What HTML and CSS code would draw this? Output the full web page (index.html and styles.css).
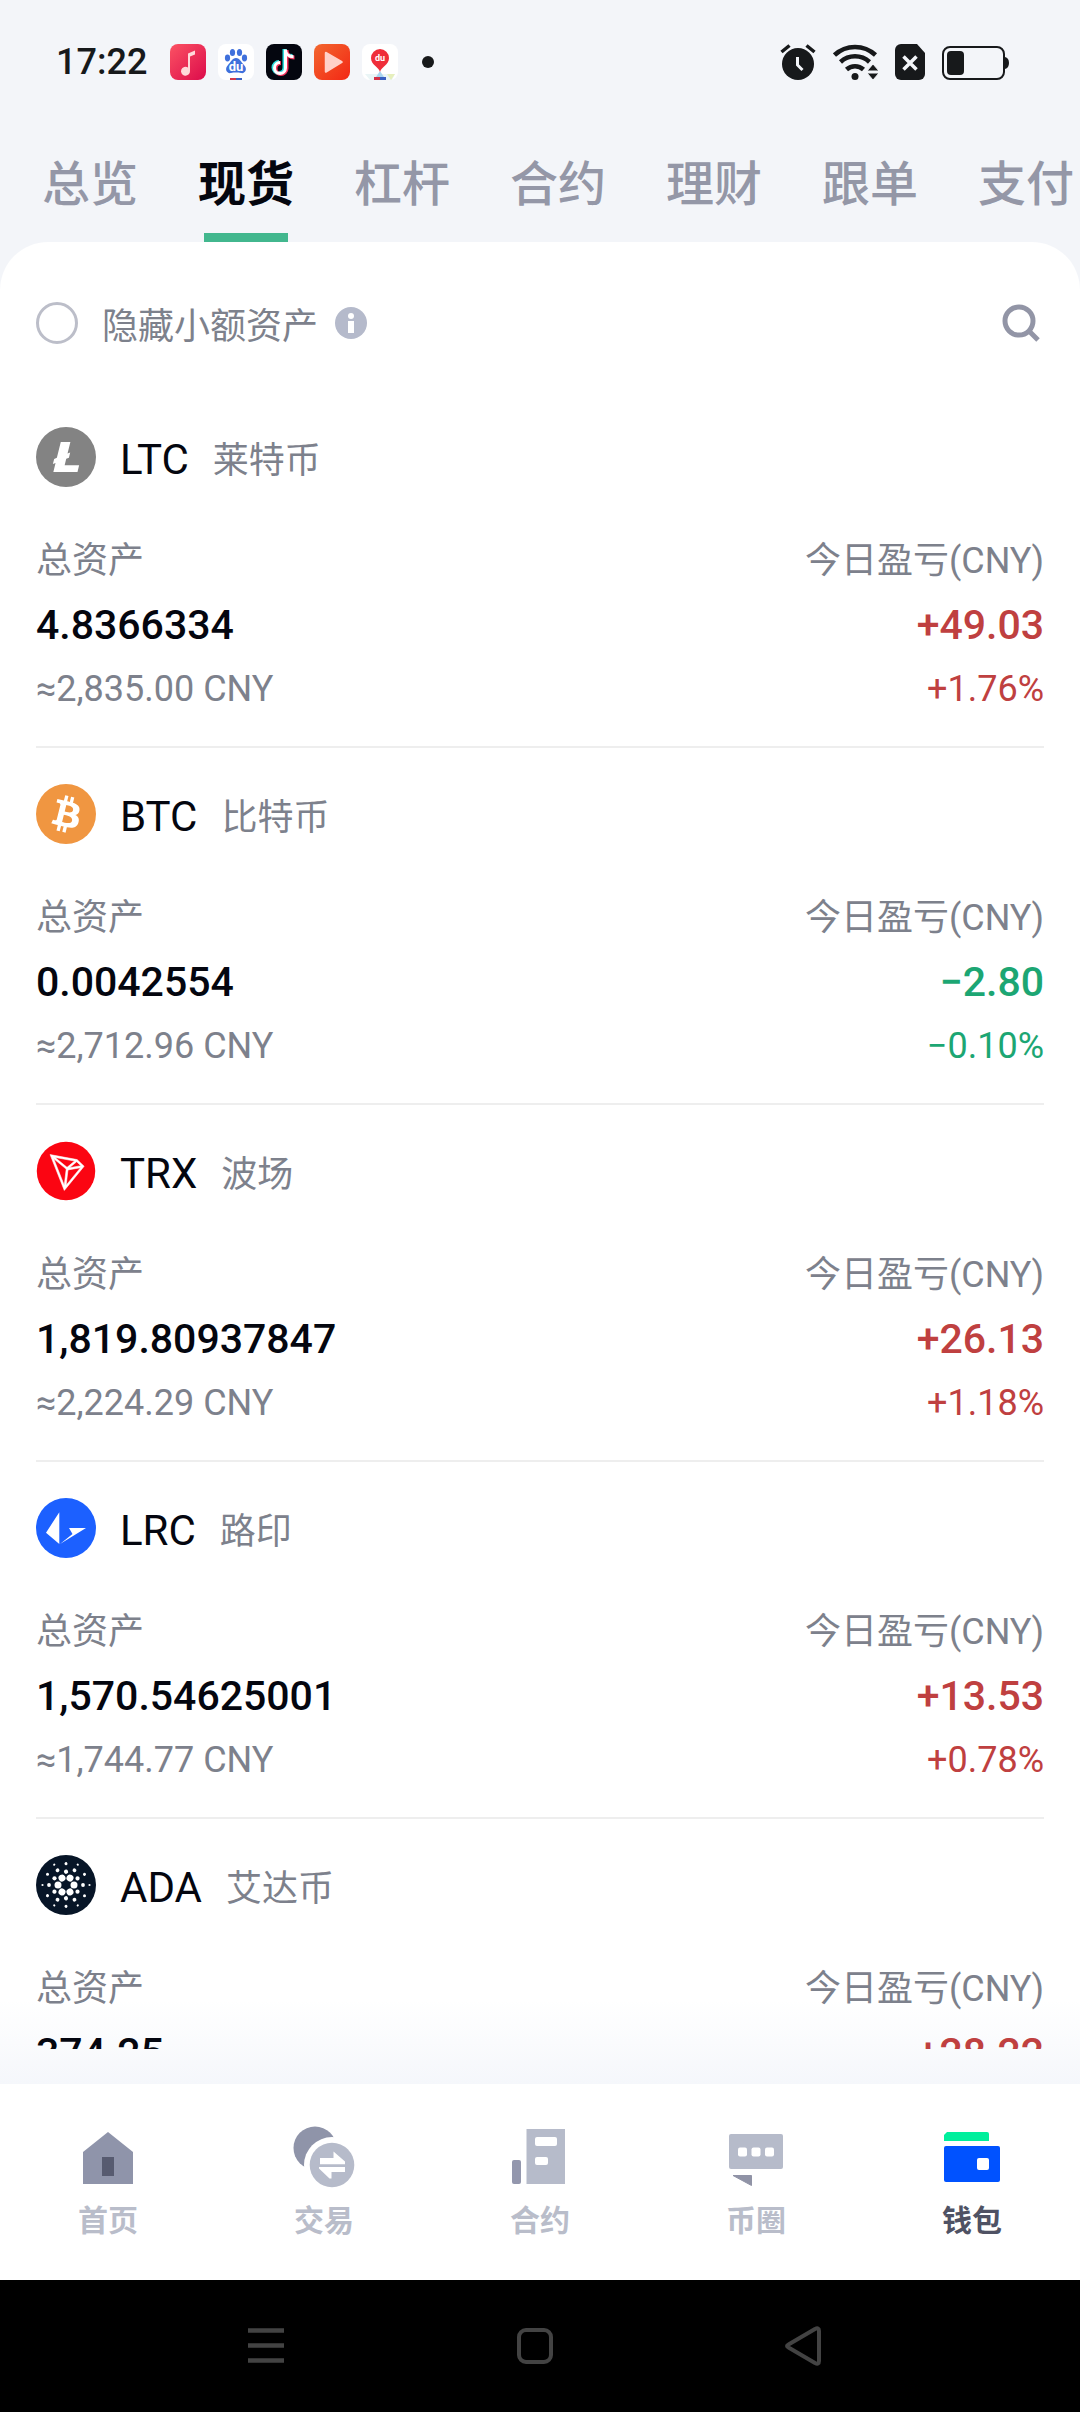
FILE: index.html
```html
<!DOCTYPE html>
<html lang="zh-CN">
<head>
<meta charset="utf-8">
<meta name="viewport" content="width=device-width, initial-scale=1">
<title>钱包 - 现货</title>
<link rel="stylesheet" href="styles.css">
</head>
<body>
<div class="app">
  <header class="status">
    <div class="status-group status-left">
      <time class="clock">17:22</time>
      <svg class="app-icon" viewBox="0 0 36 36" aria-hidden="true">
        <defs><linearGradient id="music" x1="0" y1="0" x2="1" y2="1"><stop offset="0" stop-color="#fb5263"/><stop offset="1" stop-color="#dc0b4b"/></linearGradient></defs>
        <rect width="36" height="36" rx="8" fill="url(#music)"/>
        <path d="M18 9.500l7-3v4l-5 2V27a4.500 4.500 0 1 1-2-3.500z" fill="#ffd9da"/>
      </svg>
      <svg class="app-icon" viewBox="0 0 36 36" aria-hidden="true">
        <rect width="36" height="36" rx="8" fill="#fff"/>
        <g fill="#3f70dc">
          <ellipse cx="9.500" cy="14" rx="2.600" ry="3.400"/><ellipse cx="14.500" cy="8.500" rx="2.600" ry="3.500"/><ellipse cx="21.500" cy="8.500" rx="2.600" ry="3.500"/><ellipse cx="26.500" cy="14" rx="2.600" ry="3.400"/>
          <path d="M18 14c4 0 5 4 8 7 4 4 1 9-3 8-3-.6-7-.6-10 0-4 1-7-4-3-8 3-3 4-7 8-7z"/>
        </g>
        <text class="icon-word" x="18" y="27" text-anchor="middle">du</text>
        <path d="M12 34h6v2h-6z" fill="#d23a4c"/><path d="M18 34h6v2h-6z" fill="#3b62c4"/>
      </svg>
      <svg class="app-icon" viewBox="0 0 36 36" aria-hidden="true">
        <rect width="36" height="36" rx="8" fill="#04060f"/>
        <g fill="none" stroke-width="4">
          <path d="M18.500 5v18.500a5.500 5.500 0 1 1-5.500-5.500M18.500 5c0 4 3 7 8 7" stroke="#2de0e0"/>
          <path d="M20.500 6v18.500a5.500 5.500 0 1 1-5.500-5.500M20.500 6c0 4 3 7.500 8 7.500" stroke="#f4325c"/>
          <path d="M19.500 5.500v18.500a5.500 5.500 0 1 1-5.500-5.500M19.500 5.500c0 4 3 7.200 8 7.200" stroke="#fff" stroke-width="3"/>
        </g>
      </svg>
      <svg class="app-icon" viewBox="0 0 36 36" aria-hidden="true">
        <defs><linearGradient id="video" x1="0" y1="0" x2="1" y2="1"><stop offset="0" stop-color="#f2672f"/><stop offset="1" stop-color="#f32714"/></linearGradient></defs>
        <rect width="36" height="36" rx="8" fill="url(#video)"/>
        <path d="M12 9l15.500 9L12 27.500z" fill="#ffd0c8" stroke="#ffd0c8" stroke-width="2.500" stroke-linejoin="round"/>
      </svg>
      <svg class="app-icon" viewBox="0 0 36 36" aria-hidden="true">
        <rect width="36" height="36" rx="8" fill="#fff"/>
        <path d="M3 30h30l-3 6H8z" fill="#eaf5f6"/><path d="M25 30h8l-4 6z" fill="#e6efbd"/>
        <path d="M18 27l6 9H12z" fill="#a9d5ef"/>
        <path d="M18 28c-1-5-9-7-9-14a9 9 0 0 1 18 0c0 7-8 9-9 14z" fill="#ef2e3a"/>
        <text class="icon-word icon-word-small" x="18" y="17" text-anchor="middle">du</text>
        <path d="M12 33h6v3h-6z" fill="#d33045"/><path d="M18 33h6v3h-6z" fill="#365fc0"/>
      </svg>
      <span class="more-dot"></span>
    </div>
    <div class="status-group status-right">
      <svg width="36" height="36" viewBox="0 0 36 36" aria-hidden="true">
        <circle cx="18" cy="20" r="16" fill="#17191b"/>
        <path d="M1.500 8l8-6.500M34.500 8l-8-6.500" stroke="#17191b" stroke-width="3.500"/>
        <path d="M17.500 13v8l5 5" fill="none" stroke="#f3f5f9" stroke-width="3"/>
      </svg>
      <svg width="45" height="36" viewBox="0 0 45 36" aria-hidden="true">
        <g fill="none" stroke="#17191b" stroke-width="4.500"><path d="M1.500 11a30 30 0 0 1 41 0"/><path d="M7.500 18a21.500 21.500 0 0 1 29 0"/><path d="M13.500 25.500a12.500 12.500 0 0 1 17 0"/></g>
        <circle cx="22" cy="32.500" r="3.500" fill="#17191b"/>
        <path d="M40 20l6 7H34zM34 29h12l-6 7z" fill="#17191b" stroke="#f3f5f9"/>
      </svg>
      <svg width="30" height="36" viewBox="0 0 30 36" aria-hidden="true">
        <path d="M6 0h16l8 9v21a6 6 0 0 1-6 6H6a6 6 0 0 1-6-6V6a6 6 0 0 1 6-6z" fill="#17191b"/>
        <path d="M8.500 12.500l13 13M21.500 12.500l-13 13" stroke="#f3f5f9" stroke-width="3.500"/>
      </svg>
      <svg width="67" height="36" viewBox="0 0 67 36" aria-hidden="true">
        <rect x="1" y="3" width="61" height="32" rx="7" fill="none" stroke="#17191b" stroke-width="2"/>
        <rect x="5" y="7" width="17" height="24" rx="4" fill="#17191b"/>
        <path d="M63 13q4 1 4 6t-4 6z" fill="#17191b"/>
      </svg>
    </div>
  </header>

  <nav class="tabs" aria-label="账户">
    <a class="tab" href="#overview">总览</a>
    <a class="tab tab-active" href="#spot" aria-current="page">现货</a>
    <a class="tab" href="#margin">杠杆</a>
    <a class="tab" href="#futures">合约</a>
    <a class="tab" href="#earn">理财</a>
    <a class="tab" href="#copy">跟单</a>
    <a class="tab" href="#pay">支付</a>
  </nav>

  <main class="panel">
    <div class="filter">
      <input class="filter-check" type="checkbox" id="hide-small">
      <label class="filter-label" for="hide-small">隐藏小额资产</label>
      <button class="icon-button" type="button" aria-label="说明">
        <svg width="32" height="32" viewBox="0 0 32 32"><circle cx="16" cy="16" r="16" fill="#b5bacb"/><circle cx="16" cy="9" r="3" fill="#fff"/><path d="M13 14h6v12h-6z" fill="#fff"/></svg>
      </button>
      <button class="icon-button search" type="button" aria-label="搜索">
        <svg width="42" height="42" viewBox="0 0 42 42"><circle cx="17" cy="19" r="14" fill="none" stroke="#9295a6" stroke-width="5"/><path d="M26 28l10 10" stroke="#9295a6" stroke-width="5"/></svg>
      </button>
    </div>

    <ul class="assets">
      <li class="asset">
        <div class="asset-head">
          <svg class="coin" viewBox="0 0 32 32" aria-hidden="true"><circle cx="16" cy="16" r="16" fill="#838383"/><path d="M10.427 19.214L9 19.768l.688-2.759 1.444-.58L13.213 8h5.129l-1.519 6.196 1.410-.571-.68 2.750-1.427.571-.848 3.483H23L22.127 24H9.252z" fill="#fff"/></svg>
          <h2 class="ticker">LTC</h2><span class="name">莱特币</span>
        </div>
        <div class="asset-body">
          <div class="col"><span class="muted">总资产</span><strong class="amount">4.8366334</strong><span class="muted">≈2,835.00 CNY</span></div>
          <div class="col col-end up"><span class="muted">今日盈亏(CNY)</span><strong class="amount">+49.03</strong><span>+1.76%</span></div>
        </div>
      </li>
      <li class="asset">
        <div class="asset-head">
          <svg class="coin" viewBox="0 0 32 32" aria-hidden="true"><circle cx="16" cy="16" r="16" fill="#f09641"/><path d="M23.189 14.020c.314-2.096-1.283-3.223-3.465-3.975l.708-2.840-1.728-.43-.69 2.765c-.454-.114-.92-.22-1.385-.326l.695-2.783L15.596 6l-.708 2.839c-.376-.086-.746-.17-1.104-.26l.002-.009-2.384-.595-.46 1.846s1.283.294 1.256.312c.7.175.826.638.805 1.006l-.806 3.235c.048.012.11.03.18.057l-.183-.045-1.130 4.532c-.086.212-.303.531-.793.41.018.025-1.256-.313-1.256-.313l-.858 1.978 2.250.561c.418.105.828.215 1.231.318l-.715 2.872 1.727.43.708-2.840c.472.127.93.245 1.378.357l-.706 2.828 1.728.43.715-2.866c2.948.558 5.164.333 6.097-2.333.752-2.146-.037-3.385-1.588-4.192 1.130-.26 1.980-1.003 2.207-2.538zm-3.950 5.538c-.533 2.147-4.148.986-5.320.695l.95-3.805c1.172.293 4.929.872 4.370 3.110zm.535-5.569c-.487 1.953-3.495.96-4.470.717l.86-3.450c.975.243 4.118.696 3.610 2.733z" fill="#fff"/></svg>
          <h2 class="ticker">BTC</h2><span class="name">比特币</span>
        </div>
        <div class="asset-body">
          <div class="col"><span class="muted">总资产</span><strong class="amount">0.0042554</strong><span class="muted">≈2,712.96 CNY</span></div>
          <div class="col col-end down"><span class="muted">今日盈亏(CNY)</span><strong class="amount">−2.80</strong><span>−0.10%</span></div>
        </div>
      </li>
      <li class="asset">
        <div class="asset-head">
          <svg class="coin" viewBox="0 0 32 32" aria-hidden="true"><circle cx="16" cy="16" r="15.600" fill="#fb0512"/><path d="M21.932 9.913L7.500 7.257l7.595 19.112 10.583-12.894-3.746-3.562zm-.232 1.170l2.208 2.099-6.038 1.093 3.830-3.192zm-5.142 2.973l-6.364-5.278 10.402 1.914-4.038 3.364zm-.453.934l-1.038 8.580L9.472 9.487l6.633 5.502zm.96.455l6.687-1.210-7.670 9.343.983-8.133z" fill="#fff" stroke="#fff" stroke-width=".3"/></svg>
          <h2 class="ticker">TRX</h2><span class="name">波场</span>
        </div>
        <div class="asset-body">
          <div class="col"><span class="muted">总资产</span><strong class="amount">1,819.80937847</strong><span class="muted">≈2,224.29 CNY</span></div>
          <div class="col col-end up"><span class="muted">今日盈亏(CNY)</span><strong class="amount">+26.13</strong><span>+1.18%</span></div>
        </div>
      </li>
      <li class="asset">
        <div class="asset-head">
          <svg class="coin" viewBox="0 0 60 60" aria-hidden="true"><circle cx="30" cy="30" r="30" fill="#1c60ff"/><path d="M23.300 14.300v31.700L10 34.700zM33 30h17L24 46l12.500-10z" fill="#fff"/></svg>
          <h2 class="ticker">LRC</h2><span class="name">路印</span>
        </div>
        <div class="asset-body">
          <div class="col"><span class="muted">总资产</span><strong class="amount">1,570.54625001</strong><span class="muted">≈1,744.77 CNY</span></div>
          <div class="col col-end up"><span class="muted">今日盈亏(CNY)</span><strong class="amount">+13.53</strong><span>+0.78%</span></div>
        </div>
      </li>
      <li class="asset">
        <div class="asset-head">
          <svg class="coin" viewBox="0 0 60 60" aria-hidden="true">
            <defs><g id="ray"><circle cx="38" cy="30" r="3.500"/><circle cx="47" cy="30" r="1.900"/><circle cx="53.500" cy="30" r="1.100"/><circle cx="41.500" cy="36.700" r="2.100"/><circle cx="48.500" cy="40.700" r="1.500"/></g></defs>
            <circle cx="30" cy="30" r="30" fill="#071527"/>
            <g fill="#fff"><use href="#ray"/><use href="#ray" transform="rotate(60 30 30)"/><use href="#ray" transform="rotate(120 30 30)"/><use href="#ray" transform="rotate(180 30 30)"/><use href="#ray" transform="rotate(240 30 30)"/><use href="#ray" transform="rotate(300 30 30)"/></g>
          </svg>
          <h2 class="ticker">ADA</h2><span class="name">艾达币</span>
        </div>
        <div class="asset-body">
          <div class="col"><span class="muted">总资产</span><strong class="amount">374.25</strong></div>
          <div class="col col-end up"><span class="muted">今日盈亏(CNY)</span><strong class="amount">+28.22</strong></div>
        </div>
      </li>
    </ul>
  </main>

  <nav class="bottom-nav" aria-label="主导航">
    <a class="nav-item" href="#home">
      <svg width="64" height="64" viewBox="0 0 64 64"><path d="M32 7l25 20v32H7V27z" fill="#8f94aa"/><path d="M26 32h12v19H26z" fill="#575b70"/></svg>
      首页
    </a>
    <a class="nav-item" href="#trade">
      <svg width="64" height="64" viewBox="0 0 64 64"><circle cx="23" cy="23" r="21.500" fill="#8f94a9"/><circle cx="40" cy="40" r="28" fill="#fff"/><circle cx="40" cy="40" r="22.300" fill="#b6bbca"/><path d="M28 33h13.500v-6.500L53 36.500v2.700H28zM53 42v5H39.500v6.500h-2L27 43.500V42z" fill="#fff"/></svg>
      交易
    </a>
    <a class="nav-item" href="#contract">
      <svg width="64" height="64" viewBox="0 0 64 64"><path d="M18.500 4H57v55H18.500z" fill="#b6bbca"/><rect x="27" y="12" width="22" height="9" rx="2" fill="#fff"/><rect x="27" y="32" width="13" height="8" rx="2" fill="#fff"/><rect x="4" y="35" width="9" height="24" rx="2" fill="#9397ad"/></svg>
      合约
    </a>
    <a class="nav-item" href="#circle">
      <svg width="64" height="64" viewBox="0 0 64 64"><rect x="5" y="9" width="54" height="35" rx="2" fill="#b6bbca"/><g fill="#fff"><rect x="14" y="22.500" width="9" height="9" rx="2"/><rect x="27.500" y="22.500" width="9" height="9" rx="2"/><rect x="41" y="22.500" width="9" height="9" rx="2"/></g><path d="M9 50.500h18.500v10z" fill="#9093a6" stroke="#9093a6" stroke-linejoin="round"/></svg>
      币圈
    </a>
    <a class="nav-item nav-active" href="#wallet" aria-current="page">
      <svg width="64" height="64" viewBox="0 0 64 64"><path d="M7 7h40a2 2 0 0 1 2 2v7H4v-6z" fill="#00ef9c"/><rect x="4" y="21" width="56" height="36" rx="2" fill="#0052ff"/><rect x="37" y="33" width="12" height="12" rx="2" fill="#fff"/></svg>
      钱包
    </a>
  </nav>

  <footer class="system-bar">
    <button class="icon-button" type="button" aria-label="最近任务"><svg width="36" height="40" viewBox="0 0 36 40"><path d="M0 4.500h36M0 19.500h36M0 34.500h36" stroke="#434343" stroke-width="4.500"/></svg></button>
    <button class="icon-button" type="button" aria-label="主屏幕"><svg width="36" height="40" viewBox="0 0 36 40"><rect x="2" y="4" width="32" height="32" rx="7" fill="none" stroke="#434343" stroke-width="4"/></svg></button>
    <button class="icon-button" type="button" aria-label="返回"><svg width="36" height="40" viewBox="0 0 36 40"><path d="M3.500 18.500L30 3q4-2 4 2v30q0 4-4 2L3.500 21.500q-3-1.500 0-3z" fill="none" stroke="#434343" stroke-width="4" stroke-linejoin="round"/></svg></button>
  </footer>
</div>
</body>
</html>
```
FILE: styles.css
```css
* {
  box-sizing: border-box;
}

body {
  margin: 0;
  background: #f3f5f9;
  font-family: Roboto, "Noto Sans CJK SC", sans-serif;
  color: #04060f;
}

a {
  color: inherit;
  text-decoration: none;
}

svg {
  display: block;
  flex: none;
}

.app {
  display: flex;
  flex-direction: column;
  height: 100vh;
}

/* Status bar */
.status {
  display: flex;
  flex: none;
  justify-content: space-between;
  height: 124px;
  padding: 0 71px 0 56px;
}

.status-group {
  display: flex;
  align-items: center;
}

.status-left {
  gap: 12px;
}

.status-right {
  gap: 17px;
}

.clock {
  margin-right: 11px;
  font-size: 36px;
  font-weight: 500;
  color: #17191b;
}

.app-icon {
  width: 36px;
  height: 36px;
}

.icon-word {
  font-size: 13px;
  font-weight: 700;
  fill: #fff;
}

.icon-word-small {
  font-size: 9px;
}

.more-dot {
  width: 12px;
  height: 12px;
  margin-left: 12px;
  border-radius: 50%;
  background: #17191b;
}

/* Account tabs */
.tabs {
  display: flex;
  flex: none;
  gap: 60px;
  height: 118px;
  padding: 0 42px;
  overflow: hidden;
}

.tab {
  position: relative;
  flex: none;
  font-size: 48px;
  font-weight: 500;
  line-height: 122px;
  color: #9497a7;
}

.tab-active {
  font-weight: 700;
  color: #04060f;
}

.tab-active::after {
  content: "";
  position: absolute;
  right: 6px;
  bottom: 0;
  left: 6px;
  height: 9px;
  background: #42b78e;
}

/* Asset panel */
.panel {
  display: flex;
  flex: 1;
  flex-direction: column;
  min-height: 0;
  padding: 0 36px 35px;
  border-radius: 48px 48px 0 0;
  background: linear-gradient(to top, #f5f7fb, #fff 84px);
}

.filter {
  display: flex;
  flex: none;
  align-items: center;
  height: 60px;
  margin: 51px 0 38px;
}

.filter-check {
  appearance: none;
  width: 42px;
  height: 42px;
  margin: 0 24px 0 0;
  border: 3px solid #bcbec9;
  border-radius: 50%;
}

.filter-label {
  margin-right: 17px;
  font-size: 36px;
  color: #7d818c;
}

.icon-button {
  padding: 0;
  border: 0;
  background: none;
}

.search {
  margin-left: auto;
}

.assets {
  flex: 1;
  min-height: 0;
  margin: 0;
  padding: 0;
  overflow: hidden;
  list-style: none;
}

.asset {
  padding: 36px 0 31px;
  border-bottom: 2px solid #eee;
}

.asset-head {
  display: flex;
  align-items: center;
  gap: 24px;
  margin-bottom: 48px;
}

.coin {
  width: 60px;
  height: 60px;
}

.ticker {
  margin: 0;
  padding-top: 6px;
  font-size: 42px;
  font-weight: 400;
  line-height: 52px;
}

.name {
  font-size: 36px;
  color: #7d818c;
}

.asset-body {
  display: flex;
  justify-content: space-between;
}

.col {
  display: flex;
  flex-direction: column;
  gap: 12px;
  font-size: 36px;
  line-height: 52px;
}

.col-end {
  align-items: flex-end;
}

.muted {
  color: #7d818c;
}

.amount {
  font-size: 41px;
  font-weight: 500;
}

.up {
  color: #bf4040;
}

.down {
  color: #1ca673;
}

/* Bottom navigation */
.bottom-nav {
  display: grid;
  flex: none;
  grid-template-columns: repeat(5, 1fr);
  height: 196px;
  padding-top: 41px;
  background: #fff;
}

.nav-item {
  display: flex;
  flex-direction: column;
  align-items: center;
  gap: 12px;
  font-size: 30px;
  font-weight: 700;
  line-height: 40px;
  color: #b9bdca;
}

.nav-active {
  color: #4f5264;
}

/* Android navigation keys */
.system-bar {
  display: flex;
  flex: none;
  align-items: center;
  justify-content: space-between;
  height: 132px;
  padding: 0 24% 0 23%;
  background: #000;
}
```
